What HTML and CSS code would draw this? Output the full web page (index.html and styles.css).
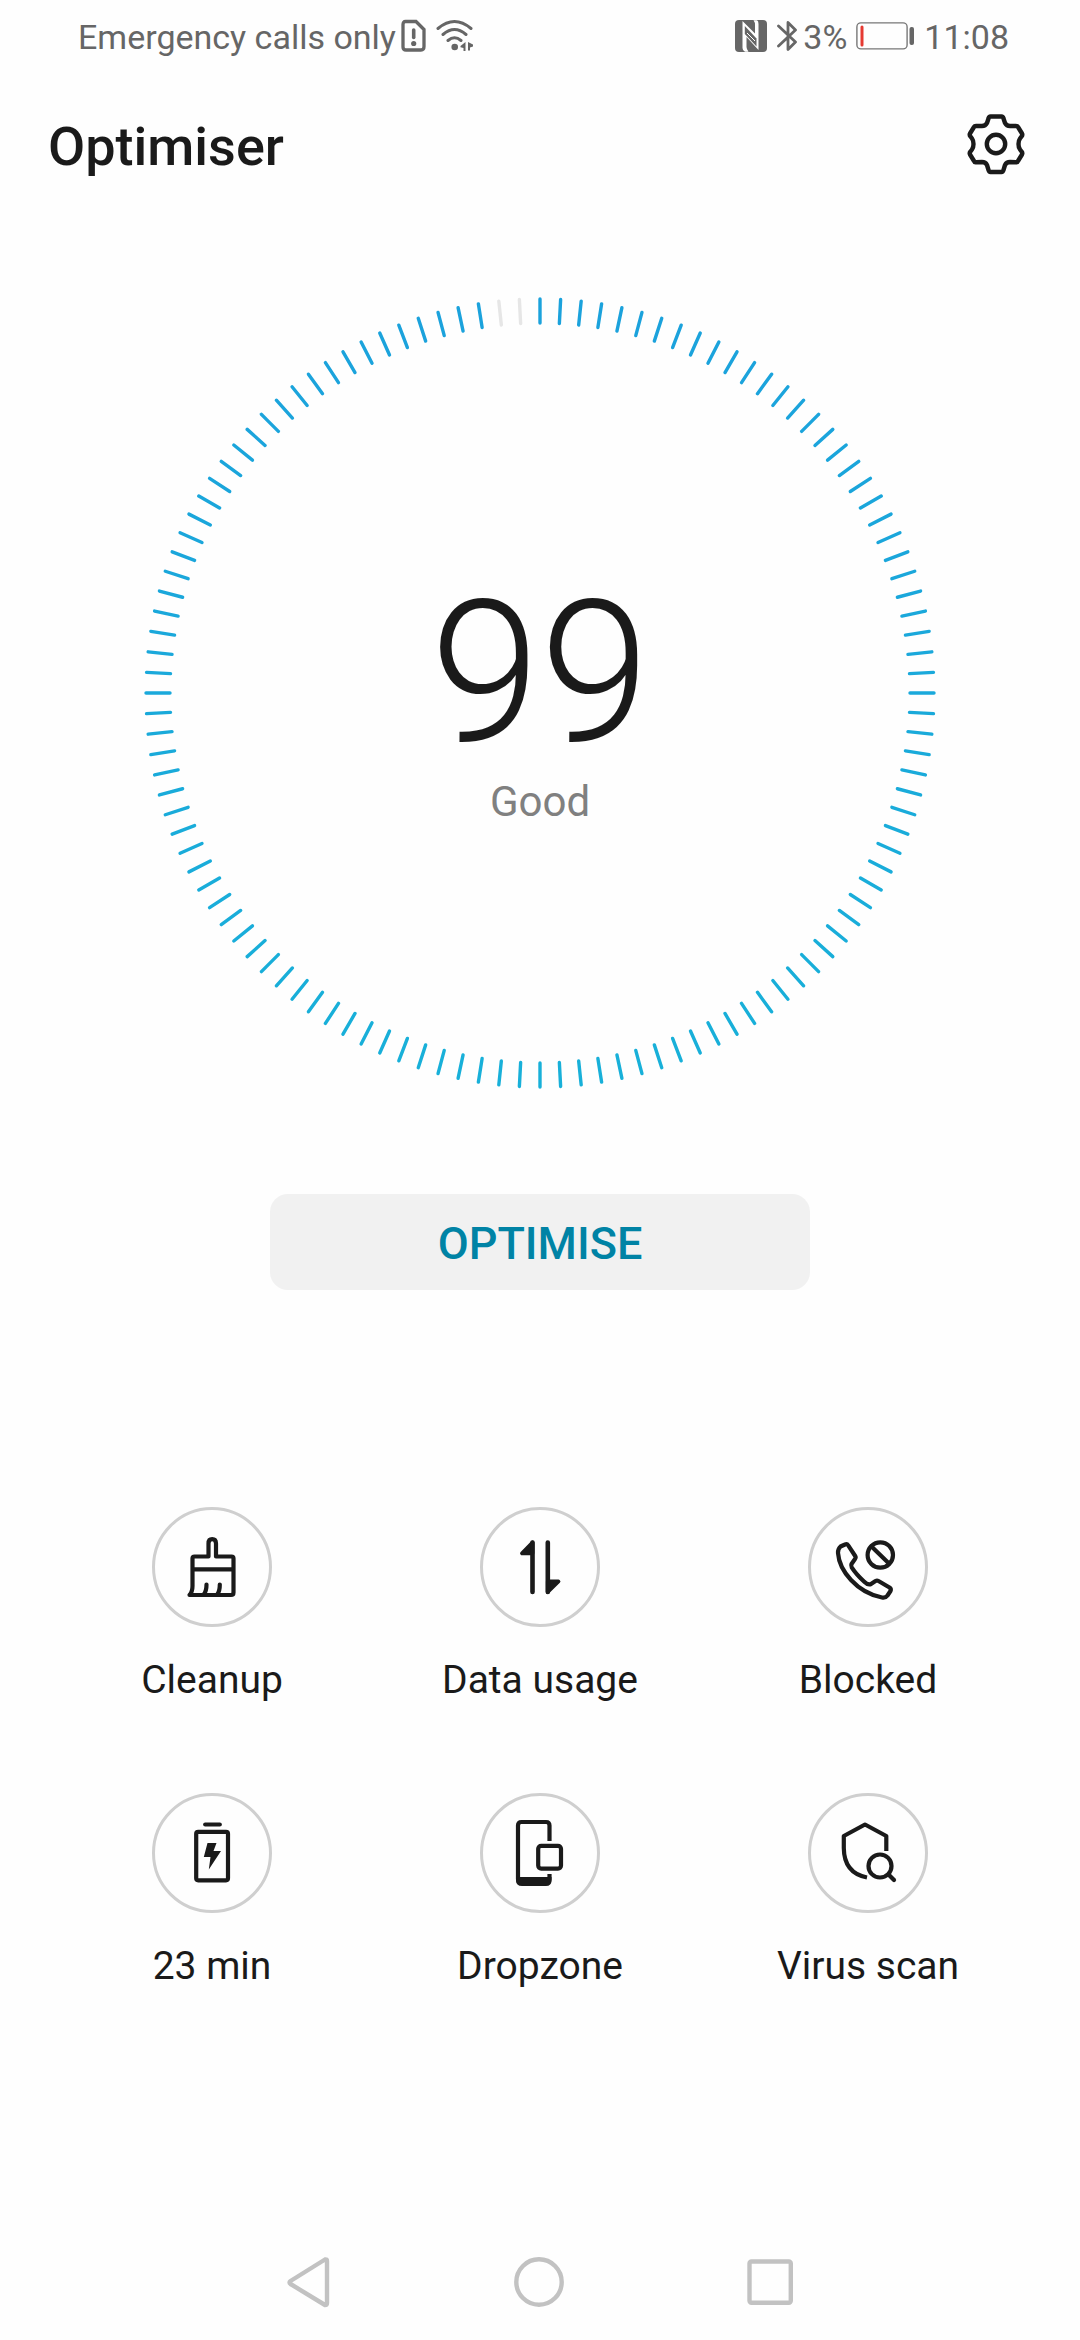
FILE: index.html
```html
<!DOCTYPE html>
<html lang="en">
<head>
<meta charset="utf-8">
<title>Optimiser</title>
<link rel="stylesheet" href="styles.css">
</head>
<body>
<div class="screen">
  <div class="status">
    <span class="carrier">Emergency calls only</span>
    <svg class="sim" width="26" height="34" viewBox="0 0 26 34"><path d="M4.500 2.500H15L23 10.500V27.500Q23 31 20 31H5Q2 31 2 28V5.500Q2 2.500 4.500 2.500Z" fill="none" stroke="#666" stroke-width="3.300"/><path d="M12.700 11V18.500" stroke="#666" stroke-width="3.600" stroke-linecap="round"/><circle cx="12.700" cy="24.500" r="2.600" fill="#666"/></svg>
    <svg class="wifi" width="38" height="34" viewBox="0 0 38 34"><g fill="none" stroke="#666" stroke-width="3" stroke-linecap="round"><path d="M2 9.500Q18.500-4.500 35 9.500M7 15.500Q18.500 5.500 30 15.500M12 21.500Q18.500 16 25 21.500"/></g><circle cx="18.700" cy="28" r="3.300" fill="#666"/><path d="M29.500 23V32H27.500V29L24.500 28.300V27ZM32 23L37 25.500V27.500L34 28.500V31.500H32Z" fill="#666"/></svg>
    <span class="grow"></span>
    <svg class="nfc" width="32" height="32" viewBox="0 0 32 32"><path d="M4 0H28Q32 0 32 4V28Q32 32 28 32H4Q0 32 0 28V4Q0 0 4 0Z" fill="#666"/><path d="M7.500 1L20 13.500V5.500Q20.500 3 18.500.3H22Q23.500 1 23.500 4V30L11.500 17V27Q11.500 29 13.500 31.700H10Q7.500 31 7.500 28Z" fill="#fff"/><path d="M9.800 6L21.500 18.500V26.500L9.800 14Z" fill="#666"/><path d="M12 13L20 21" stroke="#fff" stroke-width="1"/></svg>
    <svg class="bt" width="21" height="32" viewBox="0 0 21 32"><path d="M1.500 6L18.500 22L11 29.500V2.500L18.500 10L1.500 26" fill="none" stroke="#666" stroke-width="2.800" stroke-linejoin="round" stroke-linecap="round"/></svg>
    <span class="pct">3%</span>
    <svg class="bat" width="59" height="28" viewBox="0 0 59 28"><rect x=".9" y=".9" width="50.200" height="26" rx="4" fill="none" stroke="#777" stroke-width="1.400"/><rect x="4.500" y="3.500" width="3" height="21" rx="1.500" fill="#e53a32"/><rect x="53.500" y="5" width="4.500" height="18" rx="2" fill="#666"/></svg>
    <span class="clock">11:08</span>
  </div>
  <div class="header">
    <h1>Optimiser</h1>
    <svg width="60" height="62" viewBox="-30 -31 60 62" fill="none" stroke="#1a1a1a" stroke-width="4.400" stroke-linejoin="round"><path d="M-5.500-27.500H5.500Q7-27.500 7.500-25.500L9-21Q10.500-18 14-18H20Q21.500-18 22-17L26-10.500Q26.800-9 25.500-7.500L24-5.500Q22.500-3.500 22.500 0T24 5.500L25.500 7.500Q26.800 9 26 10.500L22 17Q21.500 18.500 20 18.300L14 18Q10.500 18 9 21L7.500 26Q7 28 5.500 28H-5.500Q-7 28-7.500 26L-9 21Q-10.500 18-14 18L-20 18.300Q-21.500 18.500-22 17L-26 10.500Q-26.800 9-25.500 7.500L-24 5.500Q-22.500 3.500-22.500 0T-24-5.500L-25.500-7.500Q-26.800-9-26-10.500L-22-17Q-21.500-18-20-18H-14Q-10.500-18-9-21L-7.500-25.500Q-7-27.500-5.500-27.500Z"/><circle r="9.200"/></svg>
  </div>
  <div class="dial">
    <svg class="ticks" id="ticks" viewBox="-400 -400 800 800" width="800" height="800"></svg>
    <div class="score">99</div>
    <div class="rating">Good</div>
  </div>
  <button class="optimise">OPTIMISE</button>
  <div class="grid">
    <div class="item"><div class="ring"><svg viewBox="0 0 120 120"><path d="M40.500 62V51.500Q40.500 49.500 42.500 49.500H56.500V36.500Q56.500 32.200 60.200 32.200T64 36.500V49.500H79.500Q81.500 49.500 81.500 51.500V85.500Q81.500 88 79 88H37.500Q40.500 85 40.500 79ZM40.500 62.300H81.500M54.500 77.500Q54.500 84 52 87M67.800 77.500Q67.800 84 65.500 87"/></svg></div><span>Cleanup</span></div>
    <div class="item"><div class="ring"><svg viewBox="0 0 120 120"><path class="solid" d="M52.500 35.500L42 46.300H52.500ZM67.800 85L78.500 74.500H67.800Z"/><path class="bar" d="M52.500 35.500V85M67.800 35.500V85"/></svg></div><span>Data usage</span></div>
    <div class="item"><div class="ring"><svg viewBox="0 0 120 120"><path d="M32.500 39.500L37 37.500Q39 36.500 40.200 38.300L47.200 49Q48.200 50.500 47 52L43.500 57Q42.800 58.500 43.700 60.300Q48 67 56 74.500Q60 78.500 63 77L67.500 74Q69 73.200 70.500 74L81.500 80.500Q83.500 82 82.500 84L79.500 88.500Q77.500 91.200 74 90.500Q56 87 43 73Q31 60 30 46Q29.800 42 32.500 39.500Z"/><circle cx="72.300" cy="48" r="12.700"/><path d="M63.500 39.500L81 56.500"/></svg></div><span>Blocked</span></div>
    <div class="item"><div class="ring"><svg viewBox="0 0 120 120"><rect x="44.200" y="38.800" width="31.800" height="48.500" rx="2"/><path d="M53.200 31.500H67.800"/><path class="fill" d="M55.500 50H64.500L61.500 58H69L56.800 76.500L58.500 64H51.800Z"/></svg></div><span>23 min</span></div>
    <div class="item"><div class="ring"><svg viewBox="0 0 120 120"><path class="butt" d="M69.500 48V32.500Q69.500 29 66 29H41.500Q38 29 38 32.500V86Q38 90 42 90H66Q69.500 90 69.500 86.500V81"/><path class="fill" d="M38 84H71.500V87Q71.500 93 66 93H42Q36 93 36 87Z"/><rect x="58.200" y="52.800" width="22.800" height="22.800" rx="3"/></svg></div><span>Dropzone</span></div>
    <div class="item"><div class="ring"><svg viewBox="0 0 120 120"><path class="butt" d="M78.300 58V43L57 31.500L35.800 43V55Q36 80 59 84.500"/><circle cx="72" cy="73" r="11.500"/><path d="M80.500 81.500L86 87"/></svg></div><span>Virus scan</span></div>
  </div>
  <div class="nav">
    <svg width="44" height="52" viewBox="0 0 44 52"><path d="M39 3.500L4.500 25Q2.500 26.500 4.500 28L39 49Q41 49 41 47V5Q41 3 39 3.500Z"/></svg>
    <svg width="52" height="52" viewBox="0 0 52 52"><circle cx="26" cy="26" r="22.700"/></svg>
    <svg width="46" height="52" viewBox="0 0 46 52"><rect x="2.500" y="5.500" width="41.300" height="41.300" rx="2"/></svg>
  </div>
</div>
<script src="dial.js"></script>
</body>
</html>
```
FILE: styles.css
```css
* { box-sizing: border-box; }
body { margin: 0; background: #fefefe; font-family: Roboto, sans-serif; color: #1a1a1a; }
.screen { width: 1080px; height: 2340px; display: flex; flex-direction: column; align-items: center; overflow: hidden; }
.screen > * { flex-shrink: 0; }
.status { width: 100%; height: 72px; padding: 0 71px 0 78px; display: flex; align-items: center; color: #666; font-size: 34px; line-height: 40px; white-space: nowrap; }
.status svg { flex-shrink: 0; }
.status span { padding-top: 2px; }
.sim { margin-left: 5px; }
.wifi { margin-left: 9px; }
.grow { flex: 1; }
.bt { margin-left: 10px; }
.pct { margin-left: 5px; }
.bat { margin-left: 9px; }
.clock { margin-left: 9px; }
.header { width: 100%; height: 146px; padding: 0 54px 0 48px; display: flex; justify-content: space-between; align-items: center; }
.header h1 { margin: 4px 0 0; font-size: 54px; line-height: 64px; font-weight: 500; }
.header svg { margin-bottom: 2px; }
.dial { width: 800px; height: 800px; margin-top: 75px; display: grid; grid-template-rows: 291px 175px 1fr; justify-items: center; }
.ticks { grid-area: 1 / 1 / 4 / 2; }
.ticks line { stroke-width: 3.400; stroke-linecap: round; }
.score { grid-area: 2 / 1; font-size: 198px; line-height: 178px; font-weight: 300; }
.rating { grid-area: 3 / 1; margin-top: 18px; font-size: 42px; line-height: 50px; color: #808080; }
.optimise { width: 540px; height: 96px; margin-top: 101px; padding: 3px 0 0; border: 0; border-radius: 18px; background: #f1f1f1; color: #0083a5; font: 500 45px/52px Roboto, sans-serif; }
.grid { width: 984px; margin-top: 217px; display: grid; grid-template-columns: repeat(3, 1fr); row-gap: 86px; }
.item { height: 200px; display: flex; flex-direction: column; align-items: center; font-size: 39px; line-height: 46px; white-space: nowrap; }
.ring { width: 120px; height: 120px; margin-bottom: 30px; border: 3px solid #cfcfcf; border-radius: 50%; }
.ring svg { display: block; width: 120px; height: 120px; margin: -3px; fill: none; stroke: #1a1a1a; stroke-width: 4.200; stroke-linecap: round; stroke-linejoin: round; }
.ring .solid { fill: #1a1a1a; stroke-width: 3.800; }
.ring .fill { fill: #1a1a1a; stroke: none; }
.ring .bar { stroke-width: 4.600; }
.ring .butt { stroke-linecap: butt; }
.nav { width: 100%; height: 116px; margin-top: auto; padding: 0 287px 0 286px; display: flex; justify-content: space-between; align-items: center; }
.nav svg { fill: none; stroke: #c2c2c2; stroke-width: 4.400; stroke-linejoin: round; }
```
FILE: dial.js
```js
// Draws one tick every 3 degrees; the last two stay unlit at a score of 99.
const dial = document.getElementById("ticks");
for (let i = 0; i < 120; i++) {
  const tick = document.createElementNS("http://www.w3.org/2000/svg", "line");
  const depth = (1 - Math.cos(i * Math.PI / 60)) / 2;
  tick.setAttribute("y1", -394);
  tick.setAttribute("y2", -370);
  tick.setAttribute("transform", `rotate(${i * 3})`);
  tick.setAttribute("stroke", i > 117 ? "#e6e6e6" : `rgb(${27 - 3 * depth}, ${162 + 14 * depth}, ${220 - 3 * depth})`);
  dial.appendChild(tick);
}
```
